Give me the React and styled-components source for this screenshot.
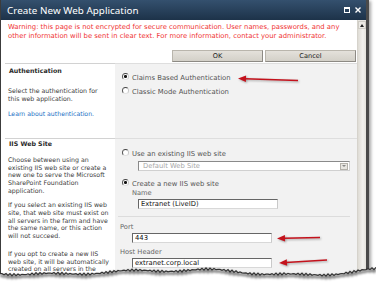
import React from "react";
import styled, { createGlobalStyle } from "styled-components";

const VERDANA = '"DejaVu Sans", Verdana, sans-serif';

const Global = createGlobalStyle`
  html, body { margin: 0; padding: 0; background: #fff; }
  body { font-family: ${VERDANA}; }
  * { box-sizing: border-box; }
`;

const Page = styled.div`
  position: relative;
  width: 376px;
  height: 302px;
  overflow: hidden;
  background: #fff;
`;

const Window = styled.div`
  width: 369px;
  height: 290px;
  display: flex;
  flex-direction: column;
  border-left: 1px solid #3c3c3c;
  border-right: 3px solid #4a4a4a;
  box-shadow: 2px 1px 3px rgba(0, 0, 0, 0.35);
  background: #fff;
`;

const TitleBar = styled.div`
  height: 20px;
  flex: none;
  display: flex;
  align-items: center;
  justify-content: space-between;
  padding: 0 5px 0 6px;
  background: linear-gradient(#34506e, #1d3249);
`;

const Title = styled.span`
  font-family: "Noto Sans", "Open Sans", sans-serif;
  font-size: 9.8px;
  color: #fff;
  letter-spacing: 0.05px;
`;

const TitleButtons = styled.div`
  display: flex;
  gap: 5px;
  align-items: center;
`;

const Body = styled.div`
  flex: 1;
  display: flex;
  min-height: 0;
`;

const Content = styled.div`
  width: 356px;
  background: #fff;
`;

const Warning = styled.p`
  margin: 0;
  padding: 2.5px 0 0 7px;
  font-size: 6.85px;
  line-height: 9px;
  color: #f03434;
  white-space: nowrap;
`;

const ButtonRow = styled.div`
  display: flex;
  justify-content: flex-end;
  gap: 2px;
  padding: 0 1px 1px 0;
  margin-top: 9.5px;
`;

const Button = styled.button`
  width: 91px;
  height: 12px;
  padding: 0;
  font-family: ${VERDANA};
  font-size: 6.6px;
  color: #222;
  background: linear-gradient(#e4e1db, #d3d0c8);
  border: 1px solid #b9b5ac;
  border-bottom-color: #8d8a84;
  border-right-color: #8d8a84;
`;

const Sections = styled.div`
  margin-left: 4px;
`;

const Section = styled.section`
  display: grid;
  grid-template-columns: 110px 1fr;
  height: ${(p) => p.$h}px;
`;

const InfoColumn = styled.div`
  border-top: 1px solid #d2d2d2;
  padding: ${(p) => p.$pt}px 0 0 3px;
  background: #fff;
`;

const FieldColumn = styled.div`
  border-top: 1px solid #dedede;
  padding: ${(p) => p.$pt}px 7px 0 5px;
  background: #f2f2f2;
`;

const Heading = styled.h3`
  margin: 0;
  font-size: 6.3px;
  line-height: 8px;
  font-weight: bold;
  color: #2a2a2a;
  padding-left: 1px;
`;

const Desc = styled.p`
  margin: ${(p) => p.$mt}px 0 0;
  font-size: 6.25px;
  line-height: ${(p) => p.$lh || 7.7}px;
  color: #3c3c3c;
  white-space: nowrap;
`;

const Link = styled.a`
  display: block;
  margin-top: 7px;
  font-size: 6.2px;
  line-height: 8px;
  color: #1a6fc4;
  text-decoration: none;
`;

const RadioRow = styled.div`
  display: flex;
  align-items: center;
  gap: 3px;
  height: 10px;
  margin: ${(p) => p.$mt || 0}px 0 0 2px;
`;

const Radio = styled.span`
  width: 7px;
  height: 7px;
  flex: none;
  margin-top: -3px;
  border-radius: 50%;
  border: 1px solid;
  border-color: #444 #c8c8c8 #e0e0e0 #555;
  background: #fff;
  display: flex;
  align-items: center;
  justify-content: center;
  &::after {
    content: "";
    width: 2.5px;
    height: 2.5px;
    border-radius: 50%;
    background: ${(p) => (p.$checked ? "#111" : "transparent")};
  }
`;

const RadioLabel = styled.span`
  font-size: 6.85px;
  color: #555;
  white-space: nowrap;
`;

const FieldLabel = styled.div`
  margin: ${(p) => p.$mt}px 0 0 ${(p) => p.$ml || 0}px;
  font-size: 6.7px;
  line-height: 8px;
  color: #666;
`;

const FieldRow = styled.div`
  display: flex;
  align-items: center;
  margin: ${(p) => p.$mt}px 0 0 ${(p) => p.$ml}px;
`;

const TextBox = styled.div`
  width: ${(p) => p.$w}px;
  height: 10px;
  flex: none;
  display: flex;
  align-items: center;
  padding-left: 2px;
  background: #fff;
  border: 1px solid;
  border-color: #666 #c9c9c9 #d8d8d8 #666;
  font-size: 6.8px;
  color: #111;
  white-space: nowrap;
`;

const Select = styled.div`
  flex: 1;
  height: 10px;
  display: flex;
  align-items: center;
  justify-content: space-between;
  padding: 0 1px 0 4px;
  background: #fff;
  border: 1px solid;
  border-color: #8a8a8a #d0d0d0 #d0d0d0 #8a8a8a;
  font-size: 6.8px;
  color: #a8a8a8;
`;

const SelectArrow = styled.span`
  width: 8px;
  height: 7px;
  background: #e8e6e1;
  border: 1px solid #b4b1aa;
  display: flex;
  align-items: center;
  justify-content: center;
  &::after {
    content: "";
    border: 2px solid transparent;
    border-top: 2px solid #888;
    border-bottom: 0;
  }
`;

const Separator = styled.hr`
  margin: 7px 0 0 -2px;
  border: 0;
  border-top: 1px solid #dcdcdc;
  height: 0;
`;

const Scrollbar = styled.div`
  width: 9px;
  display: flex;
  flex-direction: column;
  background: #e6e4df;
  border-left: 1px solid #d6d3cc;
`;

const ScrollButton = styled.div`
  height: 8px;
  margin-top: 1px;
  background: #ebe9e4;
  border: 1px solid #cfccc5;
  display: flex;
  align-items: center;
  justify-content: center;
  &::after {
    content: "";
    border: 2.5px solid transparent;
    border-bottom: 3px solid #222;
    border-top: 0;
  }
`;

const ScrollTrack = styled.div`
  flex: 1;
  background: linear-gradient(90deg, #dedbd4, #f2f1ee 60%, #e4e2dc);
`;

const ArrowSvg = styled.svg`
  flex: none;
  overflow: visible;
  margin-left: ${(p) => p.$ml}px;
  filter: drop-shadow(1px 1.5px 1px rgba(0, 0, 0, 0.35));
`;

const TornSvg = styled.svg`
  position: absolute;
  left: 0;
  top: 262px;
`;

const Arrow = ({ w, headY, tailY, ml }) => {
  const ang = Math.atan2(tailY - headY, w);
  const len = 8;
  const half = 3.2;
  const bx = len * Math.cos(ang);
  const by = len * Math.sin(ang);
  const px = -Math.sin(ang) * half;
  const py = Math.cos(ang) * half;
  return (
    <ArrowSvg width={w} height="10" $ml={ml}>
      <line x1={bx - 1} y1={headY + by} x2={w} y2={tailY} stroke="#c4121c" strokeWidth="1.6" />
      <polygon
        points={`0,${headY} ${bx + px},${headY + by + py} ${bx - px},${headY + by - py}`}
        fill="#c4121c"
      />
    </ArrowSvg>
  );
};

const tornPoints = () => {
  const pts = [];
  for (let x = 0; x <= 376; x += 2) {
    const base = 10 + 2.5 * Math.sin(x / 37) + 1.2 * Math.sin(x / 13 + 1);
    const jag = 1.1 * Math.sin(x * 1.7) + 0.8 * Math.sin(x * 3.1 + 2);
    pts.push([x, +(base + jag).toFixed(1)]);
  }
  return pts;
};

const TornEdge = () => {
  const pts = tornPoints();
  const line = pts.map((p) => p.join(",")).join(" ");
  return (
    <TornSvg width="376" height="40">
      <defs>
        <filter id="blur" x="-5%" y="-50%" width="110%" height="200%">
          <feGaussianBlur stdDeviation="1.3" />
        </filter>
      </defs>
      <polygon points={`0,40 ${line} 376,40`} fill="#fff" />
      <polyline
        points={pts.map(([x, y]) => `${x},${y + 2}`).join(" ")}
        fill="none"
        stroke="rgba(0,0,0,0.5)"
        strokeWidth="2.5"
        filter="url(#blur)"
      />
      <polyline points={line} fill="none" stroke="#333" strokeWidth="1.2" />
    </TornSvg>
  );
};

export default function App() {
  return (
    <Page>
      <Global />
      <Window>
        <TitleBar>
          <Title>Create New Web Application</Title>
          <TitleButtons>
            <svg width="6" height="6" viewBox="0 0 6 6">
              <rect x="0.5" y="0.5" width="5" height="5" fill="none" stroke="#fff" strokeWidth="1" />
              <rect x="0" y="0" width="6" height="2" fill="#fff" />
            </svg>
            <svg width="6" height="6" viewBox="0 0 6 6">
              <path d="M0.5 0.5 L5.5 5.5 M5.5 0.5 L0.5 5.5" stroke="#fff" strokeWidth="1.4" />
            </svg>
          </TitleButtons>
        </TitleBar>
        <Body>
          <Content>
            <Warning>
              Warning: this page is not encrypted for secure communication. User names, passwords, and any
              <br />
              other information will be sent in clear text. For more information, contact your administrator.
            </Warning>
            <ButtonRow>
              <Button>OK</Button>
              <Button>Cancel</Button>
            </ButtonRow>
            <Sections>
              <Section $h={75}>
                <InfoColumn $pt={3}>
                  <Heading>Authentication</Heading>
                  <Desc $mt={12} $lh={8}>
                    Select the authentication for
                    <br />
                    this web application.
                  </Desc>
                  <Link>Learn about authentication.</Link>
                </InfoColumn>
                <FieldColumn $pt={9}>
                  <RadioRow>
                    <Radio $checked />
                    <RadioLabel>Claims Based Authentication</RadioLabel>
                    <Arrow w={60} headY={5.5} tailY={7.5} ml={4} />
                  </RadioRow>
                  <RadioRow $mt={4}>
                    <Radio />
                    <RadioLabel>Classic Mode Authentication</RadioLabel>
                  </RadioRow>
                </FieldColumn>
              </Section>
              <Section $h={160}>
                <InfoColumn $pt={1}>
                  <Heading>IIS Web Site</Heading>
                  <Desc $mt={8}>
                    Choose between using an
                    <br />
                    existing IIS web site or create a
                    <br />
                    new one to serve the Microsoft
                    <br />
                    SharePoint Foundation
                    <br />
                    application.
                  </Desc>
                  <Desc $mt={6.6}>
                    If you select an existing IIS web
                    <br />
                    site, that web site must exist on
                    <br />
                    all servers in the farm and have
                    <br />
                    the same name, or this action
                    <br />
                    will not succeed.
                  </Desc>
                  <Desc $mt={10.3}>
                    If you opt to create a new IIS
                    <br />
                    web site, it will be automatically
                    <br />
                    created on all servers in the
                  </Desc>
                </InfoColumn>
                <FieldColumn $pt={10}>
                  <RadioRow>
                    <Radio />
                    <RadioLabel>Use an existing IIS web site</RadioLabel>
                  </RadioRow>
                  <FieldRow $mt={2} $ml={18}>
                    <Select>
                      Default Web Site
                      <SelectArrow />
                    </Select>
                  </FieldRow>
                  <RadioRow $mt={8}>
                    <Radio $checked />
                    <RadioLabel>Create a new IIS web site</RadioLabel>
                  </RadioRow>
                  <FieldLabel $mt={0} $ml={12}>Name</FieldLabel>
                  <FieldRow $mt={2} $ml={18}>
                    <TextBox $w={140}>Extranet (LiveID)</TextBox>
                  </FieldRow>
                  <Separator />
                  <FieldLabel $mt={6}>Port</FieldLabel>
                  <FieldRow $mt={2} $ml={12}>
                    <TextBox $w={140}>443</TextBox>
                    <Arrow w={43} headY={5.5} tailY={4.5} ml={5} />
                  </FieldRow>
                  <FieldLabel $mt={5}>Host Header</FieldLabel>
                  <FieldRow $mt={2} $ml={12}>
                    <TextBox $w={140}>extranet.corp.local</TextBox>
                    <Arrow w={48} headY={5} tailY={2} ml={7} />
                  </FieldRow>
                </FieldColumn>
              </Section>
            </Sections>
          </Content>
          <Scrollbar>
            <ScrollButton />
            <ScrollTrack />
          </Scrollbar>
        </Body>
      </Window>
      <TornEdge />
    </Page>
  );
}
